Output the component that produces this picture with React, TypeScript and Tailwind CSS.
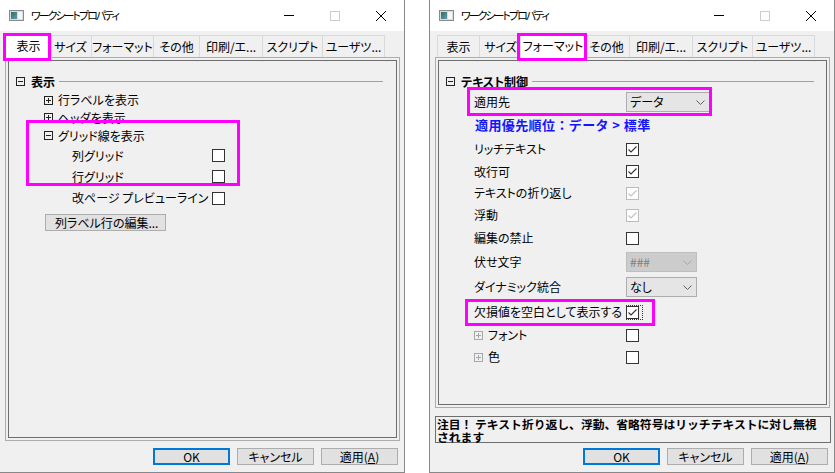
import React from "react";

type Tab = { label: string; w: string; wSel: string };

const TABS: Tab[] = [
  { label: "表示", w: "w-[43px]", wSel: "w-[47px]" },
  { label: "サイズ", w: "w-[42px]", wSel: "w-[46px]" },
  { label: "フォーマット", w: "w-[62px]", wSel: "w-[66px]" },
  { label: "その他", w: "w-[46px]", wSel: "w-[50px]" },
  { label: "印刷/エ...", w: "w-[63px]", wSel: "w-[67px]" },
  { label: "スクリプト", w: "w-[60px]", wSel: "w-[64px]" },
  { label: "ユーザツ...", w: "w-[62px]", wSel: "w-[66px]" },
];

function SheetIcon() {
  return (
    <svg width="15" height="11" viewBox="0 0 15 11" className="shrink-0">
      <defs>
        <linearGradient id="sheetg" x1="0" y1="0" x2="1" y2="1">
          <stop offset="0" stopColor="#2f6f5a" />
          <stop offset="1" stopColor="#5e9fb5" />
        </linearGradient>
      </defs>
      <rect x="0.5" y="0.5" width="14" height="10" fill="#dcdcdc" stroke="#8a8a8a" />
      <rect x="2" y="2" width="6" height="7" fill="url(#sheetg)" />
      <rect x="9" y="2" width="4" height="7" fill="#f7f7f7" />
    </svg>
  );
}

function Toggle({ open, faint }: { open?: boolean; faint?: boolean }) {
  const c = faint ? "#a8a8a8" : "#222222";
  return (
    <svg width="9" height="9" viewBox="0 0 9 9" className="shrink-0">
      <rect x="0.5" y="0.5" width="8" height="8" fill="none" stroke={c} />
      <path d="M2 4.5H7" stroke={c} />
      {!open && <path d="M4.5 2V7" stroke={c} />}
    </svg>
  );
}

function Check({ checked, disabled, focus }: { checked?: boolean; disabled?: boolean; focus?: boolean }) {
  return (
    <span
      className={`relative block w-[13px] h-[13px] border bg-white shrink-0 ${
        disabled ? "border-[#bcbcbc]" : "border-[#333333]"
      }`}
    >
      {checked && (
        <svg viewBox="0 0 11 11" className="absolute inset-0 w-[11px] h-[11px]">
          <path
            d="M1.5 5.5L4 8L9.5 2.5"
            fill="none"
            stroke={disabled ? "#c2c2c2" : "#333333"}
            strokeWidth="1.1"
          />
        </svg>
      )}
      {focus && (
        <span className="absolute -top-[2px] -left-px -right-[5px] -bottom-[2px] border border-dotted border-[#333333]" />
      )}
    </span>
  );
}

function Combo({ value, wide, disabled }: { value: string; wide?: boolean; disabled?: boolean }) {
  return (
    <div
      className={`${wide ? "w-[84px]" : "w-[71px]"} h-[20px] flex items-center justify-between pl-[3px] pr-[4px] border ${
        disabled ? "bg-[#cccccc] border-[#bfbfbf] text-[#7d7d7d]" : "bg-[#e5e5e5] border-[#adadad] text-black"
      }`}
    >
      <span>{value}</span>
      <svg width="9" height="5" viewBox="0 0 9 5">
        <path d="M0.5 0.5L4.5 4.5L8.5 0.5" fill="none" stroke={disabled ? "#a6a6a6" : "#5f5f5f"} />
      </svg>
    </div>
  );
}

function Button({ children, primary }: { children: React.ReactNode; primary?: boolean }) {
  return (
    <div
      className={`w-[77px] h-[17px] flex items-center justify-center bg-[#e1e1e1] ${
        primary ? "border-2 border-[#0078d7]" : "border border-[#adadad]"
      }`}
    >
      {children}
    </div>
  );
}

function Mark({ className }: { className: string }) {
  return <div className={`absolute border-[3px] border-[#ff00ff] pointer-events-none z-20 ${className}`} />;
}

function Window({
  active,
  pageHeight,
  note,
  children,
  marks,
  left,
}: {
  active: number;
  pageHeight: string;
  note?: boolean;
  children: React.ReactNode;
  marks: React.ReactNode;
  left?: boolean;
}) {
  return (
    <div
      className={`relative -mt-px h-[474px] w-[406px] shrink-0 border border-[#888888] flex flex-col bg-[#f0f0f0] ${
        left ? "-ml-px" : ""
      }`}
    >
      <div className="h-[31px] bg-white flex items-center">
        <div className="pl-[9px] pr-[7px] flex items-center">
          <SheetIcon />
        </div>
        <span className="text-[11px] tracking-[-2px] text-black">ワークシートプロパティ</span>
        <div className="ml-auto flex h-full">
          <div className="w-[46px] flex items-center justify-center">
            <div className="w-[10px] h-px bg-black" />
          </div>
          <div className="w-[46px] flex items-center justify-center">
            <div className="w-[10px] h-[10px] border border-[#cccccc]" />
          </div>
          <div className="w-[46px] flex items-center justify-center">
            <svg width="10" height="10" viewBox="0 0 10 10">
              <path d="M0 0L10 10M10 0L0 10" stroke="#000" strokeWidth="1" />
            </svg>
          </div>
        </div>
      </div>

      <div className="flex h-[24px] mt-[2px] pl-[7px] items-start">
        {TABS.map((t, i) =>
          i === active ? (
            <div
              key={t.label}
              className={`relative z-10 -mx-[2px] ${t.wSel} h-[25px] bg-white border border-b-0 border-[#d9d9d9] flex items-center justify-center`}
            >
              {t.label}
            </div>
          ) : (
            <div
              key={t.label}
              className={`${t.w} h-[22px] mt-[2px] border-t border-r border-[#d9d9d9] ${
                i === 0 ? "border-l" : ""
              } flex items-center justify-center`}
            >
              {t.label}
            </div>
          )
        )}
      </div>

      <div className={`ml-[5px] w-[395px] ${pageHeight} border border-[#adadad] p-[2px]`}>
        <div className="h-full border border-[#6e6e6e] bg-[#f0f0f0]">{children}</div>
      </div>

      {note && (
        <div className="mt-[8px] ml-[5px] w-[396px] h-[27px] border border-[#6e6e6e] pl-[1px] font-bold text-[11.8px] leading-[13px] text-black [font-feature-settings:normal]">
          注目！ テキスト折り返し、浮動、省略符号はリッチテキストに対し無視
          <br />
          されます
        </div>
      )}

      <div className={`flex justify-end gap-[7px] pr-[6px] ${note ? "mt-[5px]" : "mt-[7px]"}`}>
        <Button primary>OK</Button>
        <Button>キャンセル</Button>
        <Button>
          適用(<span className="underline">A</span>)
        </Button>
      </div>

      {marks}
    </div>
  );
}

function DisplayPanel() {
  return (
    <div className="pt-[11px]">
      <div className="h-[19px] flex items-center pl-[7px]">
        <Toggle open />
        <span className="ml-[6px] font-bold">表示</span>
        <div className="flex-1 h-px bg-[#a0a0a0] ml-[4px] mr-[13px]" />
      </div>
      <div className="h-[18px] flex items-center pl-[35px]">
        <Toggle />
        <span className="ml-[5px]">行ラベルを表示</span>
      </div>
      <div className="h-[17px] flex items-center pl-[35px]">
        <Toggle />
        <span className="ml-[5px]">ヘッダを表示</span>
      </div>
      <div className="h-[19px] flex items-center pl-[35px]">
        <Toggle open />
        <span className="ml-[5px]">グリッド線を表示</span>
      </div>
      <div className="h-[21px] flex items-center pl-[63px]">
        <span className="w-[140px]">列グリッド</span>
        <Check />
      </div>
      <div className="h-[21px] flex items-center pl-[63px]">
        <span className="w-[140px]">行グリッド</span>
        <Check />
      </div>
      <div className="h-[22px] flex items-center pl-[63px]">
        <span className="w-[140px]">改ページ プレビューライン</span>
        <Check />
      </div>
      <div className="mt-[5px] ml-[36px] w-[121px] h-[17px] bg-[#e1e1e1] border border-[#adadad] flex items-center pl-[9px]">
        列ラベル行の編集...
      </div>
    </div>
  );
}

function Row({ h, label, children }: { h: string; label: React.ReactNode; children?: React.ReactNode }) {
  return (
    <div className={`${h} flex items-center pl-[35px]`}>
      <div className="w-[152px] flex items-center">{label}</div>
      {children}
    </div>
  );
}

function FormatPanel() {
  return (
    <div className="pt-[11px]">
      <div className="h-[19px] flex items-center pl-[7px]">
        <Toggle open />
        <span className="ml-[6px] font-bold">テキスト制御</span>
        <div className="flex-1 h-px bg-[#a0a0a0] ml-[4px] mr-[12px]" />
      </div>
      <Row h="h-[22px]" label="適用先">
        <Combo value="データ" wide />
      </Row>
      <div className="h-[24px] flex items-center pl-[36px] font-bold text-[13px] tracking-[0.4px] text-[#1414ff] [font-feature-settings:normal]">
        適用優先順位：データ &gt; 標準
      </div>
      <Row h="h-[24px]" label="リッチテキスト">
        <Check checked />
      </Row>
      <Row h="h-[21px]" label="改行可">
        <Check checked />
      </Row>
      <Row h="h-[22px]" label="テキストの折り返し">
        <Check checked disabled />
      </Row>
      <Row h="h-[22px]" label="浮動">
        <Check checked disabled />
      </Row>
      <Row h="h-[24px]" label="編集の禁止">
        <Check />
      </Row>
      <Row h="h-[24px]" label="伏せ文字">
        <Combo value="###" disabled />
      </Row>
      <Row h="h-[26px]" label="ダイナミック統合">
        <Combo value="なし" />
      </Row>
      <Row h="h-[24px]" label="欠損値を空白として表示する">
        <Check checked focus />
      </Row>
      <Row
        h="h-[22px]"
        label={
          <>
            <Toggle faint />
            <span className="ml-[5px]">フォント</span>
          </>
        }
      >
        <Check />
      </Row>
      <Row
        h="h-[22px]"
        label={
          <>
            <Toggle faint />
            <span className="ml-[5px]">色</span>
          </>
        }
      >
        <Check />
      </Row>
    </div>
  );
}

export default function App() {
  return (
    <div className="w-[835px] h-[473px] overflow-hidden bg-white flex gap-[24px] text-[12px] text-black font-['Noto_Sans_CJK_JP',sans-serif] [font-feature-settings:'palt']">
      <Window
        left
        active={0}
        pageHeight="h-[384px]"
        marks={
          <>
            <Mark className="left-[3px] top-[33px] w-[48px] h-[28px]" />
            <Mark className="left-[26px] top-[120px] w-[214px] h-[66px]" />
          </>
        }
      >
        <DisplayPanel />
      </Window>
      <Window
        active={2}
        pageHeight="h-[351px]"
        note
        marks={
          <>
            <Mark className="left-[87px] top-[33px] w-[70px] h-[28px]" />
            <Mark className="left-[37px] top-[87px] w-[245px] h-[29px]" />
            <Mark className="left-[35px] top-[299px] w-[190px] h-[27px]" />
          </>
        }
      >
        <FormatPanel />
      </Window>
    </div>
  );
}
